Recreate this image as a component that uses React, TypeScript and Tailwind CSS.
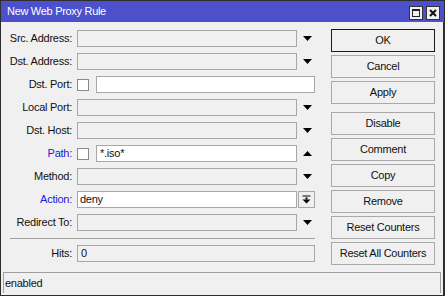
import type { ReactNode } from "react";

const FIELD_GRAY = "h-[17px] border border-[#a7a7a7] bg-[#f0f0f0]";
const FIELD_WHITE = "h-[17px] border border-[#a7a7a7] bg-white";

function DownArrow() {
  return (
    <svg width="9" height="5" viewBox="0 0 9 5" className="ml-[6px]">
      <polygon points="0,0 9,0 4.5,5" fill="#000" />
    </svg>
  );
}

function UpArrow() {
  return (
    <svg width="9" height="5" viewBox="0 0 9 5" className="ml-[6px]">
      <polygon points="0,5 9,5 4.5,0" fill="#000" />
    </svg>
  );
}

function CheckBox() {
  return <div className="w-[12px] h-[12px] border border-[#8a8a8a] bg-white" />;
}

function Row({
  label,
  blue,
  children,
}: {
  label: string;
  blue?: boolean;
  children: ReactNode;
}) {
  return (
    <div className="flex items-center h-[17px]">
      <div
        className={
          "w-[72px] text-right pr-[1px] whitespace-nowrap " +
          (blue ? "text-[#1a1ad8]" : "text-[#111]")
        }
      >
        {label}
      </div>
      <div className="ml-[4px] flex items-center">{children}</div>
    </div>
  );
}

function Btn({ label, main }: { label: string; main?: boolean }) {
  return (
    <div
      className={
        "h-[23px] w-[104px] flex items-center justify-center bg-[#f0f0f0] text-[#111] border " +
        (main ? "border-[#1a1a1a]" : "border-[#a9a9a9]")
      }
    >
      {label}
    </div>
  );
}

export default function App() {
  return (
    <div className="w-[445px] h-[296px] bg-[#f0f0f0] border border-[#2e2e2e] flex flex-col font-['Liberation_Sans',Arial,sans-serif] text-[11px] tracking-[-0.25px] leading-none overflow-hidden">
      {/* title bar */}
      <div className="h-[21px] bg-[#4c50ca] flex items-center pl-[6px] pr-[4px] text-white shrink-0">
        <span className="tracking-[-0.3px]">New Web Proxy Rule</span>
        <div className="ml-auto flex gap-[3px] mt-[2px]">
          <div className="w-[14px] h-[14px] bg-[#f0f0f0] border border-[#333] flex items-center justify-center">
            <div className="w-[8px] h-[8px] border border-[#222] border-t-2" />
          </div>
          <div className="w-[14px] h-[14px] bg-[#f0f0f0] border border-[#333] flex items-center justify-center">
            <svg width="8" height="8" viewBox="0 0 8 8">
              <path d="M1 1 L7 7 M7 1 L1 7" stroke="#111" strokeWidth="2" />
            </svg>
          </div>
        </div>
      </div>

      {/* body */}
      <div className="flex-1 flex flex-col border-r border-[#2e2e2e]">
        <div className="flex">
          <div className="w-[330px] pt-[8px] flex flex-col">
            <div className="flex flex-col gap-[6px]">
              <Row label="Src. Address:">
                <div className={FIELD_GRAY + " w-[220px]"} />
                <DownArrow />
              </Row>
              <Row label="Dst. Address:">
                <div className={FIELD_GRAY + " w-[220px]"} />
                <DownArrow />
              </Row>
              <Row label="Dst. Port:">
                <CheckBox />
                <div className={FIELD_WHITE + " w-[219px] ml-[7px]"} />
              </Row>
              <Row label="Local Port:">
                <div className={FIELD_GRAY + " w-[220px]"} />
                <DownArrow />
              </Row>
              <Row label="Dst. Host:">
                <div className={FIELD_GRAY + " w-[220px]"} />
                <DownArrow />
              </Row>
              <Row label="Path:" blue>
                <CheckBox />
                <div className={FIELD_WHITE + " w-[201px] ml-[7px] flex items-center pl-[3px] text-[#111]"}>
                  *.iso*
                </div>
                <UpArrow />
              </Row>
              <Row label="Method:">
                <div className={FIELD_GRAY + " w-[220px]"} />
                <DownArrow />
              </Row>
              <Row label="Action:" blue>
                <div className={FIELD_WHITE + " w-[220px] flex items-center pl-[2px] text-[#111]"}>
                  deny
                </div>
                <div className="w-[17px] h-[17px] ml-[1px] border border-[#a7a7a7] bg-[#f0f0f0] flex items-center justify-center">
                  <svg width="9" height="9" viewBox="0 0 9 9">
                    <rect x="0.5" y="0.5" width="8" height="1" fill="#000" />
                    <rect x="3.5" y="2.5" width="2" height="2" fill="#000" />
                    <polygon points="0.5,4.5 8.5,4.5 4.5,8.5" fill="#000" />
                  </svg>
                </div>
              </Row>
              <Row label="Redirect To:">
                <div className={FIELD_GRAY + " w-[220px]"} />
                <DownArrow />
              </Row>
            </div>
            <div className="ml-[9px] w-[305px] h-px bg-[#a0a0a0] mt-[7px]" />
            <div className="mt-[6px]">
              <Row label="Hits:">
                <div className={FIELD_GRAY + " w-[238px] flex items-center pl-[3px] text-[#111]"}>
                  0
                </div>
              </Row>
            </div>
          </div>

          <div className="pt-[7px] flex flex-col">
            <div className="flex flex-col gap-[3px]">
              <Btn label="OK" main />
              <Btn label="Cancel" />
              <Btn label="Apply" />
            </div>
            <div className="flex flex-col gap-[3px] mt-[8px]">
              <Btn label="Disable" />
              <Btn label="Comment" />
              <Btn label="Copy" />
              <Btn label="Remove" />
              <Btn label="Reset Counters" />
              <Btn label="Reset All Counters" />
            </div>
          </div>
        </div>

        {/* status bar */}
        <div className="mt-auto mb-[2px] mx-[2px] h-[21px] border-t border-l border-r border-[#a0a0a0] flex items-center pl-[1px] text-[#111]">
          enabled
        </div>
      </div>
    </div>
  );
}
